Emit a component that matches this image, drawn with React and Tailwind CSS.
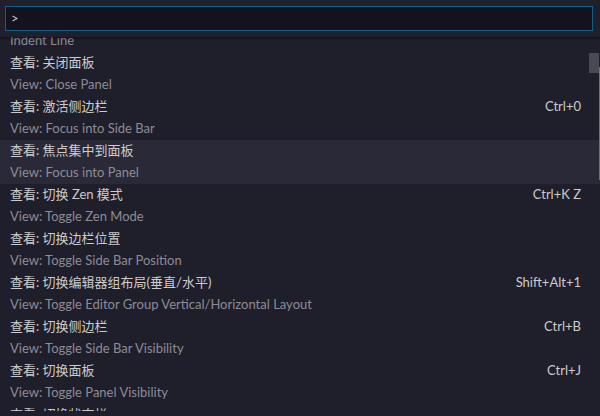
import React from "react";

const items = [
  { label: "", desc: "Indent Line" },
  { label: "查看: 关闭面板", desc: "View: Close Panel" },
  { label: "查看: 激活侧边栏", desc: "View: Focus into Side Bar", key: "Ctrl+0" },
  { label: "查看: 焦点集中到面板", desc: "View: Focus into Panel", active: true },
  { label: "查看: 切换 Zen 模式", desc: "View: Toggle Zen Mode", key: "Ctrl+K Z" },
  { label: "查看: 切换边栏位置", desc: "View: Toggle Side Bar Position" },
  { label: "查看: 切换编辑器组布局(垂直/水平)", desc: "View: Toggle Editor Group Vertical/Horizontal Layout", key: "Shift+Alt+1" },
  { label: "查看: 切换侧边栏", desc: "View: Toggle Side Bar Visibility", key: "Ctrl+B" },
  { label: "查看: 切换面板", desc: "View: Toggle Panel Visibility", key: "Ctrl+J" },
  { label: "查看: 切换状态栏", desc: "View: Toggle Status Bar Visibility" },
];

const font = { fontFamily: 'Lato, "Noto Sans CJK SC", sans-serif' };

export default function App() {
  return (
    <div
      className="relative w-[600px] h-[416px] overflow-hidden bg-[#1f1e2b] text-[13px]"
      style={font}
    >
      {/* header with input */}
      <div className="relative z-10 h-[37px] bg-[#201f2c] px-[5px] pt-[6px] shadow-[0_1px_3px_rgba(0,0,0,0.5)]">
        <div className="flex h-[25px] w-[588px] items-center border border-[#155c8a] bg-[#13121d] px-[5px] text-[#cccccc]">
          &gt;
        </div>
      </div>

      {/* list */}
      <div className="h-[374px] overflow-hidden">
        <div className="-mt-[29px]">
          {items.map((it, i) => (
            <div
              key={i}
              className={
                "h-[44px] pl-[10px] pr-[19px] " + (it.active ? "bg-[#2a2937]" : "")
              }
            >
              <div className="flex h-[22px] items-center justify-between text-[#cccccc]">
                <span>{it.label}</span>
                {it.key && <span>{it.key}</span>}
              </div>
              <div className="flex h-[22px] items-center text-[#8d8c96]">
                {it.desc}
              </div>
            </div>
          ))}
        </div>
      </div>

      {/* scrollbar */}
      <div className="absolute right-[1px] top-[53px] h-[20px] w-[10px] bg-[#4a4953]" />
      <div className="absolute right-0 top-[67px] h-[113px] w-[1px] bg-[#707079]" />
    </div>
  );
}
